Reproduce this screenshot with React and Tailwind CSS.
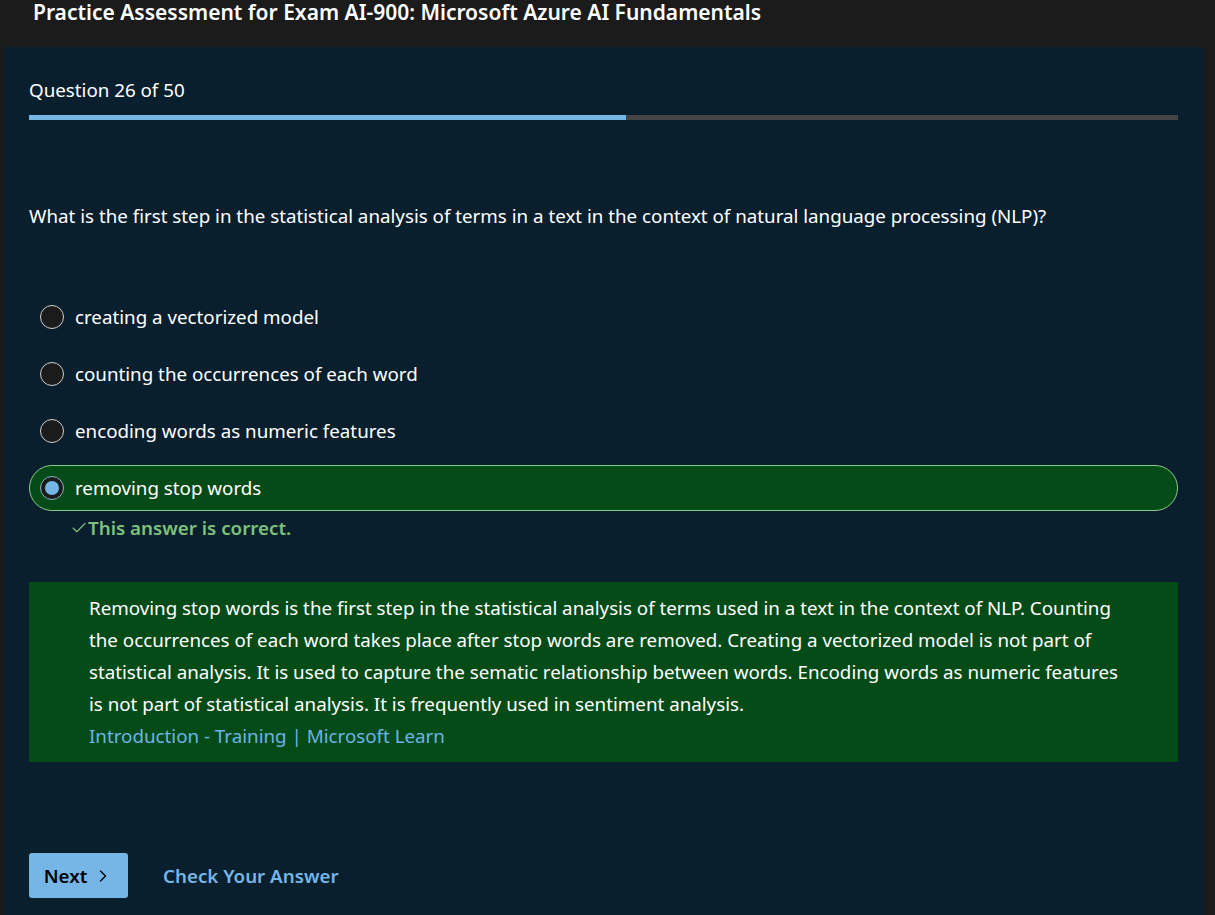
import { Check, ChevronRight } from 'lucide-react';

const options = [
  { text: 'creating a vectorized model', selected: false },
  { text: 'counting the occurrences of each word', selected: false },
  { text: 'encoding words as numeric features', selected: false },
  { text: 'removing stop words', selected: true },
];

function Radio({ selected }) {
  if (selected) {
    return (
      <span className="flex h-6 w-6 shrink-0 items-center justify-center rounded-full border border-[#8fb0c8] bg-[#1b1b1b]">
        <span className="h-[14px] w-[14px] rounded-full bg-[#75b6e7]" />
      </span>
    );
  }
  return <span className="h-6 w-6 shrink-0 rounded-full border border-[#cfcfcf] bg-[#1b1b1b]" />;
}

export default function App() {
  return (
    <div className="h-[915px] overflow-hidden bg-[#1b1b1b] font-['Noto_Sans',sans-serif] text-white">
      <div className="flex h-[47px] items-start pl-[33px]">
        <div className="-mt-[3px] text-[21px] font-semibold leading-[30px]">
          Practice Assessment for Exam AI-900: Microsoft Azure AI Fundamentals
        </div>
      </div>
      <div className="ml-[4px] mr-[12px] h-[868px] bg-[#0a1f2e] px-[25px] pt-[31px] text-[18.75px]">
        <div className="leading-[24px]">Question 26 of 50</div>
        <div className="mt-[13px] flex h-[5px] bg-[#444444]">
          <div className="h-full w-[52%] bg-[#75b6e7]" />
        </div>

        <div className="mt-[84px] leading-[24px]">
          What is the first step in the statistical analysis of terms in a text in the context of natural language processing (NLP)?
        </div>

        <div className="mt-[66px] flex flex-col gap-[11px]">
          {options.map((o, i) => (
            <div
              key={i}
              className={`flex h-[46px] items-center gap-[11px] rounded-full border pl-[10px] ${
                o.selected ? 'border-[#8cc98c] bg-[#054b17]' : 'border-transparent'
              }`}
            >
              <Radio selected={o.selected} />
              <span>{o.text}</span>
            </div>
          ))}
        </div>
        <div className="mt-[3px] flex items-center pl-[41px] font-semibold text-[#7cc27c]">
          <Check size={18} strokeWidth={1.5} />
          <span>This answer is correct.</span>
        </div>

        <div className="mt-[40px] bg-[#054b17] py-[10px] pl-[60px] pr-[58px] leading-[32px]">
          <p>
            Removing stop words is the first step in the statistical analysis of terms used in a text in the context of NLP. Counting the occurrences of each word takes place after stop words are removed. Creating a vectorized model is not part of statistical analysis. It is used to capture the sematic relationship between words. Encoding words as numeric features is not part of statistical analysis. It is frequently used in sentiment analysis.
          </p>
          <a href="#" className="text-[#6cb4e8]">Introduction - Training | Microsoft Learn</a>
        </div>

        <div className="mt-[91px] flex items-center gap-[35px]">
          <button className="flex h-[45px] w-[99px] items-center justify-center gap-[6px] rounded-[3px] bg-[#75b6e7] font-semibold text-black">
            Next <ChevronRight size={20} strokeWidth={1.5} />
          </button>
          <a href="#" className="font-semibold text-[#75b6e7]">Check Your Answer</a>
        </div>
      </div>
    </div>
  );
}
